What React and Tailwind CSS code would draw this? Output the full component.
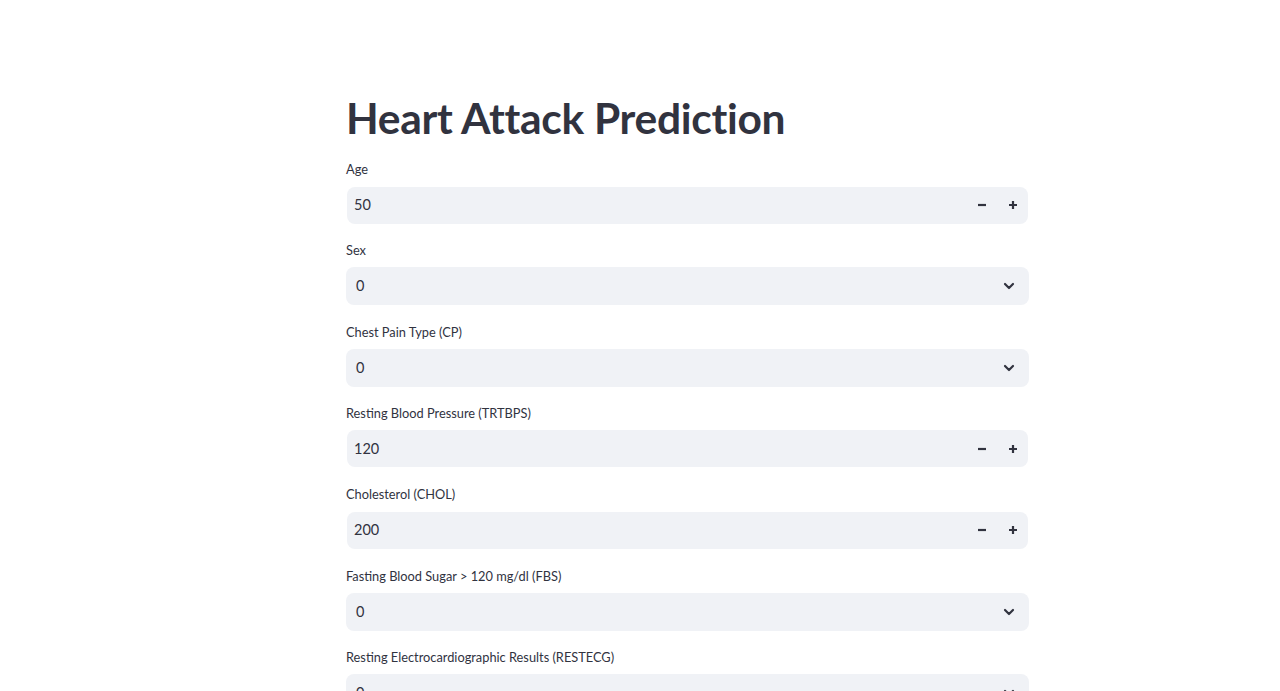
import React from 'react';

const fields = [
  { label: 'Age', type: 'number', value: '50' },
  { label: 'Sex', type: 'select', value: '0' },
  { label: 'Chest Pain Type (CP)', type: 'select', value: '0' },
  { label: 'Resting Blood Pressure (TRTBPS)', type: 'number', value: '120' },
  { label: 'Cholesterol (CHOL)', type: 'number', value: '200' },
  { label: 'Fasting Blood Sugar > 120 mg/dl (FBS)', type: 'select', value: '0' },
  { label: 'Resting Electrocardiographic Results (RESTECG)', type: 'select', value: '0' },
];

const Minus = () => (
  <svg width="10" height="10" viewBox="0 0 10 10">
    <path d="M1 5h8" stroke="#31333f" strokeWidth="2.2" />
  </svg>
);

const Plus = () => (
  <svg width="10" height="10" viewBox="0 0 10 10">
    <path d="M1 5h8M5 1v8" stroke="#31333f" strokeWidth="2.2" />
  </svg>
);

const Chevron = () => (
  <svg width="12" height="12" viewBox="0 0 12 12">
    <path d="M2 4l4 4 4-4" fill="none" stroke="#31333f" strokeWidth="2.2" strokeLinecap="round" strokeLinejoin="round" />
  </svg>
);

const Field = ({ label, type, value }) => (
  <div className="flex flex-col">
    <div className="h-[25px] mb-[4px] flex items-center text-[12.8px] text-[#31333f]">{label}</div>
    {type === 'number' ? (
      <div className="h-[38px] py-[0.5px] px-[1px]">
        <div className="h-full rounded-lg bg-[#f0f2f6] flex items-center pl-[7px]">
          <span className="flex-1 text-[14.5px] text-[#31333f]">{value}</span>
          <div className="flex items-center">
            <span className="w-[31px] flex justify-center"><Minus /></span>
            <span className="w-[31px] flex justify-center"><Plus /></span>
          </div>
        </div>
      </div>
    ) : (
      <div className="h-[38px] rounded-lg bg-[#f0f2f6] flex items-center pl-[10px] pr-[14px]">
        <span className="flex-1 text-[14.5px] text-[#31333f]">{value}</span>
        <Chevron />
      </div>
    )}
  </div>
);

export default function App() {
  return (
    <div className="bg-white overflow-hidden" style={{ height: 691 }}>
      <div className="w-[683px] ml-[346px] pt-[91px]" style={{ fontFamily: 'Lato, "Open Sans", sans-serif' }}>
        <h1 className="text-[42.5px] font-bold text-[#31333f] leading-[54px] tracking-[-0.3px] mb-[12px]">Heart Attack Prediction</h1>
        <div className="flex flex-col gap-[14.33px]">
          {fields.map((f) => (
            <Field key={f.label} {...f} />
          ))}
        </div>
      </div>
    </div>
  );
}
